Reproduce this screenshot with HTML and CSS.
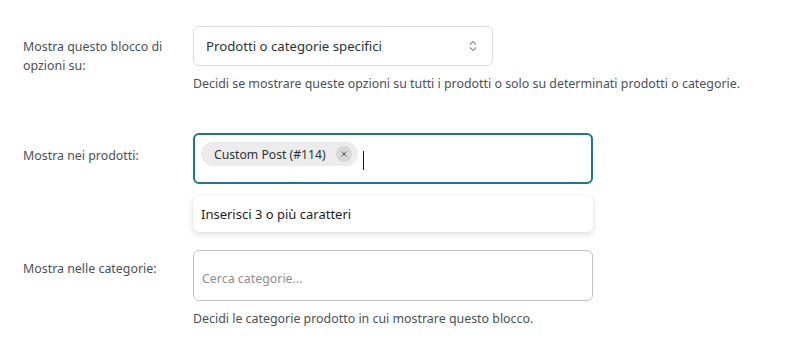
FILE: index.html
```html
<!DOCTYPE html>
<html lang="it">
<head>
<meta charset="utf-8">
<link rel="stylesheet" href="styles.css">
</head>
<body>
<div class="form">
  <div class="row row-1">
    <div class="label">Mostra questo blocco di opzioni su:</div>
    <div class="field">
      <div class="select">
        <span>Prodotti o categorie specifici</span>
        <svg class="chev" width="10" height="14" viewBox="0 0 10 14"><path d="M2 5.5 L5 2.5 L8 5.5 M2 8.5 L5 11.5 L8 8.5" fill="none" stroke="#8c8f94" stroke-width="1.2"/></svg>
      </div>
      <div class="help">Decidi se mostrare queste opzioni su tutti i prodotti o solo su determinati prodotti o categorie.</div>
    </div>
  </div>
  <div class="row row-2">
    <div class="label">Mostra nei prodotti:</div>
    <div class="field">
      <div class="multi focus">
        <span class="chip">Custom Post (#114)<span class="chip-x"><svg width="8" height="8" viewBox="0 0 8 8"><path d="M1.5 1.5 L6.5 6.5 M6.5 1.5 L1.5 6.5" stroke="#50575e" stroke-width="1"/></svg></span></span>
        <span class="caret"></span>
      </div>
      <div class="dropdown">Inserisci 3 o più caratteri</div>
    </div>
  </div>
  <div class="row row-3">
    <div class="label">Mostra nelle categorie:</div>
    <div class="field">
      <div class="multi"><span class="placeholder">Cerca categorie...</span></div>
      <div class="help">Decidi le categorie prodotto in cui mostrare questo blocco.</div>
    </div>
  </div>
</div>
</body>
</html>
```
FILE: styles.css
```css
html, body {
  margin: 0;
  padding: 0;
  background: #ffffff;
}
body {
  font-family: "Noto Sans", "Open Sans", sans-serif;
  font-size: 12.4px;
  color: #4a5157;
}
.form {
  padding: 26px 0 0 23px;
  display: flex;
  flex-direction: column;
}
.row {
  display: grid;
  grid-template-columns: 170px 580px;
}
.row-2 { margin-top: 40px; }
.row-3 { margin-top: 18px; }
.label {
  line-height: 19px;
  padding-top: 11px;
  padding-right: 12px;
}
.row-2 .label { padding-top: 13px; }
.row-3 .label { padding-top: 9px; }
.field {
  display: flex;
  flex-direction: column;
}
.select {
  box-sizing: border-box;
  width: 300px;
  height: 40px;
  border: 1px solid #dcdcde;
  border-radius: 6px;
  display: flex;
  align-items: center;
  justify-content: space-between;
  padding: 0 14px 0 12px;
  color: #2c3338;
  font-size: 13.2px;
}
.chev { display: block; }
.help {
  margin-top: 9px;
  line-height: 18px;
  color: #4a5157;
  white-space: nowrap;
}
.multi {
  box-sizing: border-box;
  width: 400px;
  height: 51px;
  border: 1px solid #c3c4c7;
  border-radius: 6px;
  display: flex;
  align-items: flex-start;
  padding: 7px 7px;
}
.multi.focus {
  border: 2px solid #1a7894;
  padding: 6px 6px;
}
.chip {
  display: inline-flex;
  align-items: center;
  height: 24px;
  margin-top: 1px;
  border-radius: 12px;
  background: #ececec;
  color: #2c3338;
  padding: 0 6px 0 13px;
  font-size: 12.2px;
}
.chip-x {
  display: inline-flex;
  align-items: center;
  justify-content: center;
  width: 16px;
  height: 16px;
  border-radius: 50%;
  background: #d8d8d8;
  margin-left: 10px;
}
.caret {
  display: inline-block;
  width: 1px;
  height: 19px;
  background: #1e1e1e;
  margin: 10px 0 0 5px;
}
.dropdown {
  box-sizing: border-box;
  width: 400px;
  height: 36px;
  margin-top: 12px;
  border-radius: 6px;
  background: #fff;
  box-shadow: 0 2px 6px rgba(0,0,0,0.14), 0 0 1px rgba(0,0,0,0.08);
  color: #1e1e1e;
  display: flex;
  align-items: center;
  padding: 0 8px;
  font-size: 13px;
}
.multi .placeholder {
  color: #8c8f94;
  line-height: 42px;
  padding-left: 1px;
}
```
